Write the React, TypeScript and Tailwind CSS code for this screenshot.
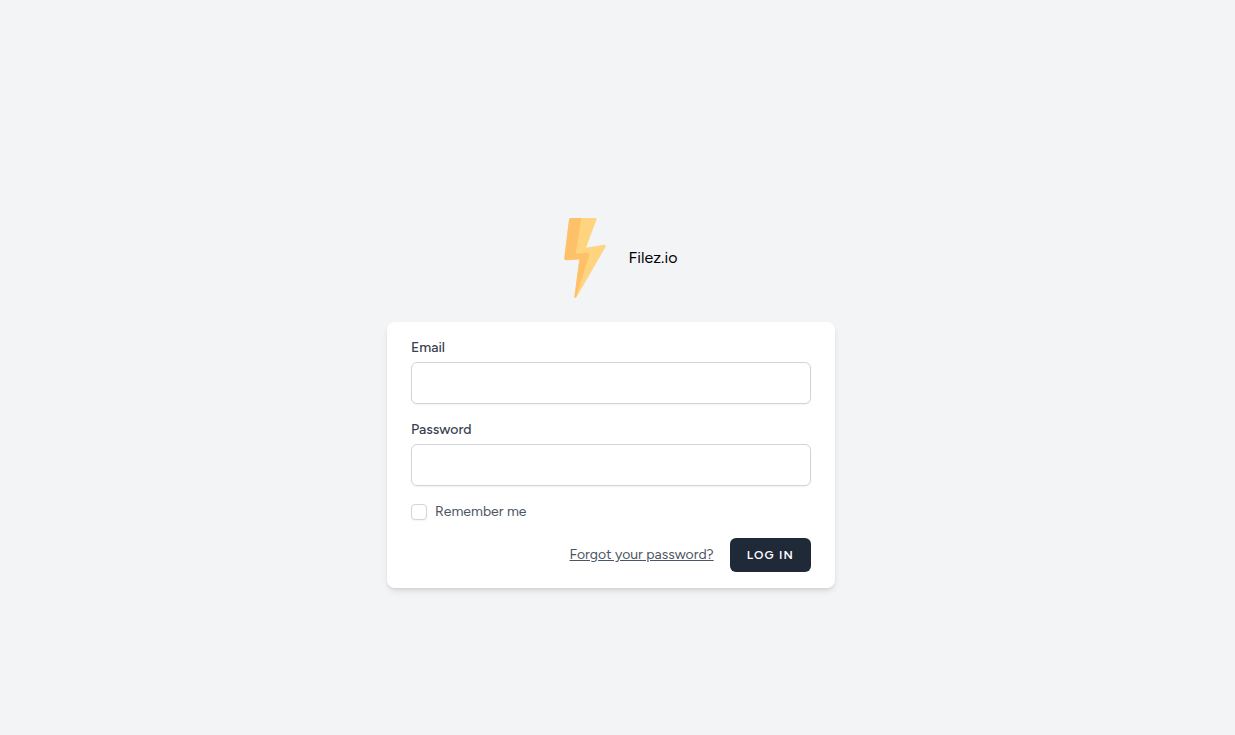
import React from "react";

function BoltLogo() {
  return (
    <svg viewBox="0 0 80 80" className="size-20" aria-hidden="true">
      <path
        fill="#ffd47f"
        d="M26 0H50.2Q52 .2 51.4 2L41 29.8L59 26.8Q61.4 26.8 60.4 29L31.6 79Q30.4 80.4 29.4 79L34.4 41.2L21.4 42.2Q19.3 42.2 19.3 40L24 1.8Q24.4 0 26 0Z"
      />
      <path
        fill="#ffc06a"
        d="M26 0H36.4L30.8 35.4L42 34.8Q44.8 34.8 44.2 37.4L31 79.2Q30 80.2 29.4 79L34.4 41.2L21.4 42.2Q19.3 42.2 19.3 40L24 1.8Q24.4 0 26 0Z"
      />
    </svg>
  );
}

function Field({ id, label, type }: { id: string; label: string; type: string }) {
  return (
    <div>
      <label htmlFor={id} className="block text-sm font-medium text-[#374151]">
        {label}
      </label>
      <input
        id={id}
        name={id}
        type={type}
        className="mt-1 block h-[42px] w-full rounded-md border border-[#d1d5db] bg-white px-3 shadow-xs outline-none focus:border-indigo-500"
      />
    </div>
  );
}

export default function App() {
  return (
    <main className="flex min-h-screen flex-col items-center justify-center bg-[#f3f4f6] pt-[71px] pr-[13px] font-['Figtree','Lato',sans-serif] text-[#111827]">
      <a href="#" className="flex items-center gap-1 text-base text-black">
        <BoltLogo />
        <span>Filez.io</span>
      </a>

      <form
        className="mt-6 flex w-full max-w-md flex-col gap-4 rounded-lg bg-white px-6 py-4 shadow-md"
        onSubmit={(e) => e.preventDefault()}
      >
        <Field id="email" label="Email" type="email" />
        <Field id="password" label="Password" type="password" />

        <label htmlFor="remember" className="flex items-center gap-2 self-start text-sm text-[#4b5563]">
          <input
            id="remember"
            type="checkbox"
            className="size-4 appearance-none rounded-sm border border-[#d1d5db] bg-white shadow-xs checked:bg-indigo-600"
          />
          <span>Remember me</span>
        </label>

        <div className="flex items-center justify-end gap-4">
          <a href="#" className="text-sm text-[#4b5563] underline">
            Forgot your password?
          </a>
          <button
            type="submit"
            className="rounded-md border border-transparent bg-[#1f2937] px-4 py-2 text-xs font-semibold tracking-widest text-white uppercase"
          >
            Log in
          </button>
        </div>
      </form>
    </main>
  );
}
